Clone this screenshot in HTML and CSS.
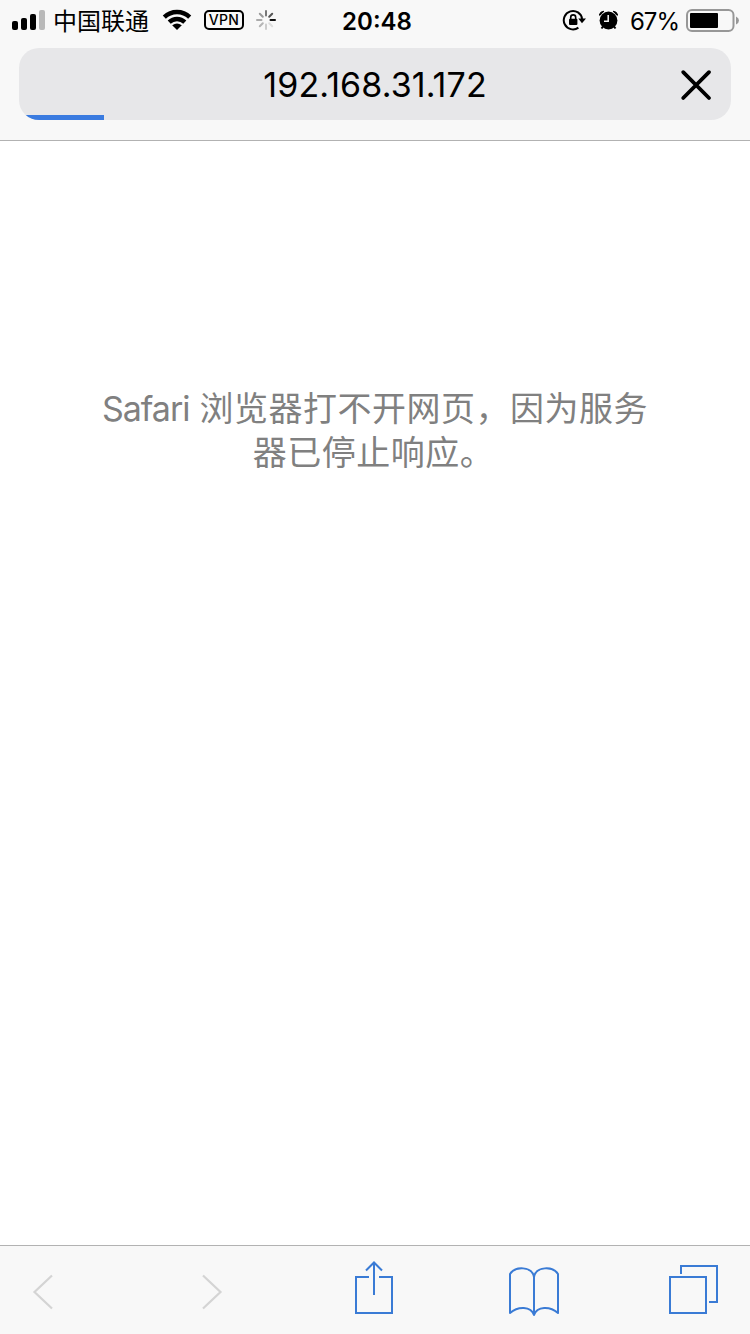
FILE: index.html
```html
<!DOCTYPE html>
<html lang="zh-CN">
<head>
<meta charset="utf-8">
<title>192.168.31.172</title>
<link rel="stylesheet" href="styles.css">
</head>
<body>
<div class="screen">
  <header class="header">
    <div class="status">
      <div class="status-left">
        <svg class="icon" width="34" height="40" viewBox="11 0 34 40"><rect x="12" y="21" width="6" height="9" rx="2"/><rect x="21" y="18" width="6" height="12" rx="2"/><rect x="30" y="14" width="6" height="16" rx="2"/><rect x="39" y="10" width="6" height="20" rx="2" fill="#b9b9b9"/></svg>
        <span class="carrier">中国联通</span>
        <svg class="icon wifi" width="30" height="40" viewBox="162 0 30 40"><g fill="none" stroke="#000" stroke-width="4.4"><path d="M164.3 17.2A18.2 18.2 0 0 1 189.7 17.2"/><path d="M169.2 22.1A11.2 11.2 0 0 1 184.8 22.1"/></g><path d="M172.2 25.2Q177 21.8 181.8 25.2L177 30Z"/></svg>
        <span class="vpn">VPN</span>
        <svg class="icon spinner" width="22" height="40" viewBox="255 0 22 40"><g stroke-width="2" stroke-linecap="round"><path d="M270.5 20H275" stroke="#111"/><path d="M269.2 23.2L272.2 26.2" stroke="#ddd"/><path d="M266 24.5V29" stroke="#ccc"/><path d="M262.8 23.2L259.8 26.2" stroke="#b5b5b5"/><path d="M261.5 20H257" stroke="#aaa"/><path d="M262.8 16.8L259.8 13.8" stroke="#999"/><path d="M266 15.5V11" stroke="#777"/><path d="M269.2 16.8L272.2 13.8" stroke="#555"/></g></svg>
      </div>
      <time class="clock">20:48</time>
      <div class="status-right">
        <svg class="icon" width="25" height="40" viewBox="562 0 25 40"><path d="M578.4 27.6A9.2 9.2 0 1 1 582.1 19" fill="none" stroke="#000" stroke-width="2"/><path d="M578.3 18.5H586L582 23.2Z"/><rect x="569" y="18.7" width="8.4" height="6.3" rx="1"/><path d="M570.7 19V17.4a2.5 2.5 0 0 1 5 0V19" fill="none" stroke="#000" stroke-width="1.6"/></svg>
        <svg class="icon alarm" width="20" height="40" viewBox="599 0 20 40"><circle cx="608.5" cy="20.5" r="8.9"/><path d="M599.3 15Q600 11.5 604 11.2L599.7 15.4ZM617.7 15Q617 11.5 613 11.2L617.3 15.4Z" stroke="#000"/><path d="M603 26.5L601.5 28.5M614 26.5L615.5 28.5" stroke="#000" stroke-width="2"/><path d="M608.2 15V21.2H604" fill="none" stroke="#f7f7f7" stroke-width="1.5"/></svg>
        <span class="percent">67%</span>
        <svg class="icon" width="54" height="40" viewBox="686 0 54 40"><rect x="687" y="10" width="46.5" height="21" rx="5" fill="none" stroke="#979797" stroke-width="2"/><rect x="690" y="13" width="28" height="15" rx="1"/><path d="M736 16.5Q739 18 739 20.5T736 24.5Z" fill="#979797"/></svg>
      </div>
    </div>
    <div class="address">
      <span class="url">192.168.31.172</span>
      <svg class="close" width="34" height="34" viewBox="679 67 34 34"><path d="M683.2 72.2L709 98M709 72.2L683.2 98" fill="none" stroke="#000" stroke-width="3.8" stroke-linecap="round"/></svg>
      <div class="progress"></div>
    </div>
  </header>
  <main class="page">
    <p class="message"><span class="latin">Safari</span> 浏览器打不开网页，因为服务<br><span class="ending">器已停止响应。</span></p>
  </main>
  <nav class="toolbar">
    <svg width="750" height="88" viewBox="0 1246 750 88" fill="none" stroke="#3a7bd5" stroke-width="2">
      <path d="M52 1275.5L34.5 1292L52 1308.5M203 1275.5L220.5 1292L203 1308.5" stroke="#d4d4d4" stroke-width="2.2"/>
      <path d="M369 1277H356V1313H392V1277H379M374 1295V1263M366 1270.5L374 1262.5L382 1270.5"/>
      <path d="M534 1277C532 1266 515 1266 510 1274V1313C518 1306 531 1306 534 1315C537 1306 550 1306 558 1313V1274C553 1266 536 1266 534 1277V1315" stroke-linejoin="round"/>
      <path d="M670 1277H706V1313H670ZM681 1274V1266H717V1302H709"/>
    </svg>
  </nav>
</div>
</body>
</html>
```
FILE: styles.css
```css
body { margin: 0; }
.screen {
  display: flex;
  flex-direction: column;
  width: 750px;
  height: 1334px;
  background: #fff;
  color: #000;
  font-family: Inter, "Noto Sans CJK SC", sans-serif;
}
svg { display: block; flex: none; }
.header {
  box-sizing: border-box;
  height: 141px;
  background: #f8f8f8;
  border-bottom: 1px solid #b2b2b2;
}
.status {
  display: grid;
  grid-template-columns: 1fr auto 1fr;
  grid-template-rows: 40px;
  align-items: start;
  height: 40px;
  padding: 0 10px 0 11px;
  margin-bottom: 8px;
}
.status-left, .status-right { display: flex; align-items: flex-start; height: 40px; }
.status-right { justify-content: flex-end; }
.carrier { margin-left: 8px; padding-top: 2px; font-size: 24px; line-height: 40px; }
.wifi { margin-left: 13px; }
.vpn {
  box-sizing: border-box;
  width: 40px;
  height: 20px;
  margin: 10px 0 0 12px;
  border: 2px solid #000;
  border-radius: 5px;
  font-size: 14px;
  font-weight: 500;
  line-height: 16px;
  letter-spacing: 0.3px;
  text-align: center;
}
.spinner { margin-left: 11px; }
.clock { padding: 2px 0 0 3px; font-size: 24px; font-weight: 600; line-height: 40px; }
.alarm { margin-left: 12px; }
.percent { margin: 0 7px 0 11px; padding-top: 2px; font-size: 24px; line-height: 40px; letter-spacing: -1px; }
.address {
  position: relative;
  display: flex;
  align-items: center;
  justify-content: flex-end;
  height: 72px;
  margin: 0 19px;
  padding-right: 18px;
  box-sizing: border-box;
  border-radius: 20px;
  background: #e7e7e9;
  overflow: hidden;
}
.url { flex: 1; padding: 2px 0 0 52px; font-size: 34px; line-height: 72px; letter-spacing: 0.1px; text-align: center; }
.progress {
  position: absolute;
  left: 0;
  bottom: 0;
  width: 85px;
  height: 5px;
  background: #3a7be0;
}
.page { flex: 1; }
.message {
  margin: 246px 0 0;
  color: #808080;
  font-size: 34px;
  line-height: 44px;
  letter-spacing: 0.5px;
  text-align: center;
}
.latin { letter-spacing: -1px; }
.ending { margin-right: 3px; }
.toolbar { height: 88px; border-top: 1px solid #b2b2b2; background: #f8f8f8; }
```
